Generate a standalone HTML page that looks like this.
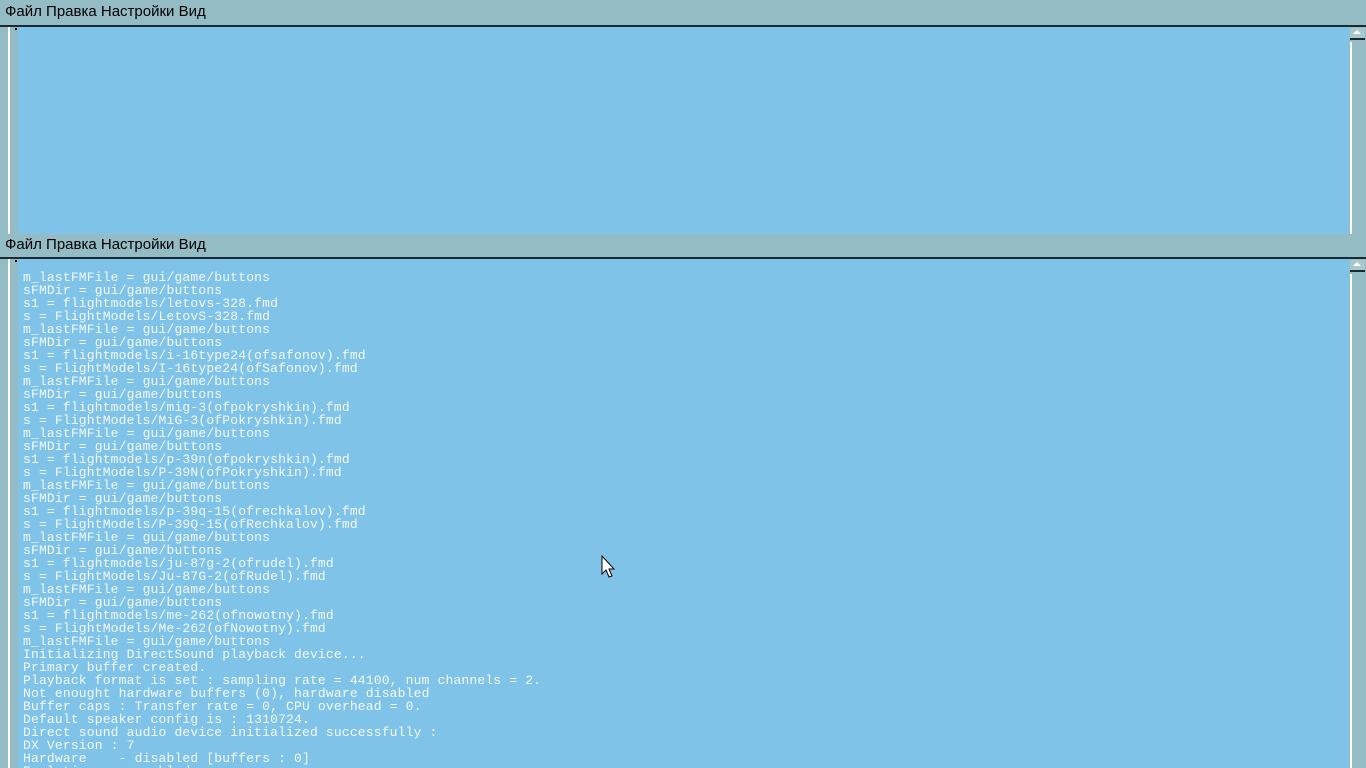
<!DOCTYPE html>
<html style="overflow:hidden;width:1366px;height:768px"><head><meta charset="utf-8"><style>
*{margin:0;padding:0;box-sizing:border-box}
body{width:1366px;height:768px;overflow:hidden;background:#7fc4e8;position:relative;font-family:"Liberation Sans",sans-serif}
.menu{position:absolute;left:0;width:1366px;background:#93bcc4;color:#000;font-size:15px;padding-left:5px}
.line{position:absolute;left:0;width:1366px;height:2px;background:#1a2a33}
.gut{position:absolute;left:0;width:18px;background:#93bcc4}
.gut:after{content:"";position:absolute;left:8px;top:0;width:2px;height:100%;background:#fff}
.sb{position:absolute;left:1349px;width:17px;background:#93bcc4}
.btn{position:absolute;left:1350px;width:15px;height:12px;background:#a8c8cc;border-bottom:2px solid #1a2a33}
.btn:after{content:"";position:absolute;left:3px;top:2px;border-left:4px solid transparent;border-right:4px solid transparent;border-bottom:4px solid #fff}
.trk{position:absolute;left:1350px;width:2px;background:#fff}
.dot{position:absolute;left:15px;width:2px;height:2px;background:#000}
pre{position:absolute;left:23px;top:271px;font-family:"Liberation Mono",monospace;font-size:13px;line-height:13px;color:#f4f8fb;letter-spacing:0.17px;height:497px;overflow:hidden}
</style></head><body>
<div class="menu" style="top:0;height:25px;line-height:24px">Файл Правка Настройки Вид</div>
<div class="line" style="top:25px"></div>
<div class="gut" style="top:27px;height:207px"></div>
<div class="sb" style="top:27px;height:207px"></div>
<div class="btn" style="top:28px"></div>
<div class="trk" style="top:42px;height:192px"></div>
<div class="dot" style="top:28px"></div>
<div class="menu" style="top:234px;height:23px;line-height:22px">Файл Правка Настройки Вид</div>
<div class="line" style="top:257px"></div>
<div class="gut" style="top:259px;height:509px"></div>
<div class="sb" style="top:259px;height:509px"></div>
<div class="btn" style="top:260px"></div>
<div class="trk" style="top:274px;height:494px"></div>
<div class="dot" style="top:260px"></div>
<pre>m_lastFMFile = gui/game/buttons
sFMDir = gui/game/buttons
s1 = flightmodels/letovs-328.fmd
s = FlightModels/LetovS-328.fmd
m_lastFMFile = gui/game/buttons
sFMDir = gui/game/buttons
s1 = flightmodels/i-16type24(ofsafonov).fmd
s = FlightModels/I-16type24(ofSafonov).fmd
m_lastFMFile = gui/game/buttons
sFMDir = gui/game/buttons
s1 = flightmodels/mig-3(ofpokryshkin).fmd
s = FlightModels/MiG-3(ofPokryshkin).fmd
m_lastFMFile = gui/game/buttons
sFMDir = gui/game/buttons
s1 = flightmodels/p-39n(ofpokryshkin).fmd
s = FlightModels/P-39N(ofPokryshkin).fmd
m_lastFMFile = gui/game/buttons
sFMDir = gui/game/buttons
s1 = flightmodels/p-39q-15(ofrechkalov).fmd
s = FlightModels/P-39Q-15(ofRechkalov).fmd
m_lastFMFile = gui/game/buttons
sFMDir = gui/game/buttons
s1 = flightmodels/ju-87g-2(ofrudel).fmd
s = FlightModels/Ju-87G-2(ofRudel).fmd
m_lastFMFile = gui/game/buttons
sFMDir = gui/game/buttons
s1 = flightmodels/me-262(ofnowotny).fmd
s = FlightModels/Me-262(ofNowotny).fmd
m_lastFMFile = gui/game/buttons
Initializing DirectSound playback device...
Primary buffer created.
Playback format is set : sampling rate = 44100, num channels = 2.
Not enought hardware buffers (0), hardware disabled
Buffer caps : Transfer rate = 0, CPU overhead = 0.
Default speaker config is : 1310724.
Direct sound audio device initialized successfully :
DX Version : 7
Hardware    - disabled [buffers : 0]
Emulation   - enabled</pre>
<svg style="position:absolute;left:601px;top:555px" width="16" height="26" viewBox="0 0 16 26"><path d="M1 1 L1 19 L5 15 L8 22 L11 21 L8 14 L13 14 Z" fill="#fff" stroke="#000" stroke-width="1"/></svg>
</body></html>
